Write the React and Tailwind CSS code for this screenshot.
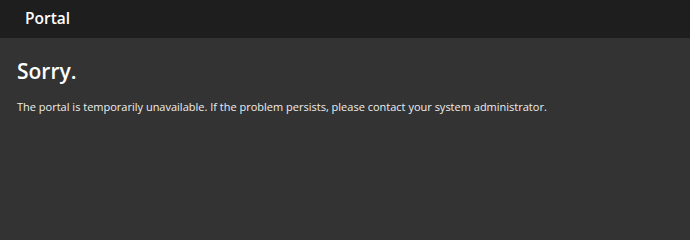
export default function App() {
  return (
    <div className="w-[690px] h-[240px] bg-[#333333] text-white" style={{ fontFamily: '"Open Sans", sans-serif' }}>
      <div className="h-[38px] bg-[#1e1e1e] flex items-center pl-[25px]">
        <span className="text-[15.5px] font-semibold">Portal</span>
      </div>
      <div className="px-[17px] pt-[18px]">
        <h1 className="text-[21px] font-semibold leading-[30px]">Sorry.</h1>
        <p className="text-[11px] mt-[13px] text-[#eeeeee]">The portal is temporarily unavailable. If the problem persists, please contact your system administrator.</p>
      </div>
    </div>
  );
}
